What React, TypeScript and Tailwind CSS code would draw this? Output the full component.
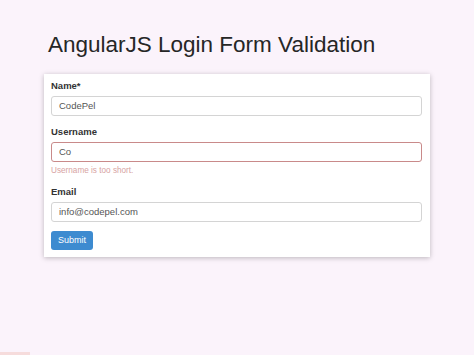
import React from 'react';

const Field: React.FC<{ label: string; value: string; error?: boolean }> = ({ label, value, error }) => (
  <div>
    <label className="block text-[9.5px] leading-[12px] font-bold text-[#333] mb-[4px]">{label}</label>
    <div
      className={`h-[20px] w-full rounded-[3px] border bg-white px-[7px] flex items-center text-[9.5px] text-[#555] ${
        error ? 'border-[#c98a8a]' : 'border-[#d4d4d4]'
      }`}
    >
      {value}
    </div>
  </div>
);

const App: React.FC = () => {
  return (
    <div className="min-h-[355px] bg-[#fbf3fb] flex flex-col font-['Liberation_Sans',Arial,sans-serif]">
      <div className="pl-[48px] pt-[32px]">
        <h1 className="text-[22.5px] leading-[26px] text-[#262626]">AngularJS Login Form Validation</h1>
      </div>

      {/* form card */}
      <div className="ml-[44px] mt-[16px] w-[386px] bg-white shadow-[0_1px_5px_rgba(0,0,0,0.25)] pt-[6px] pb-[7px] pl-[7px] pr-[8px]">
        <Field label="Name*" value="CodePel" />
        <div className="mt-[10px]">
          <Field label="Username" value="Co" error />
          <p className="mt-[3px] text-[8.2px] leading-[12px] text-[#d7a3a3]">Username is too short.</p>
        </div>
        <div className="mt-[9px]">
          <Field label="Email" value="info@codepel.com" />
        </div>
        <button className="mt-[9px] h-[19px] px-[7px] rounded-[3px] bg-[#3d8bd0] text-white text-[9px] leading-[19px]">
          Submit
        </button>
      </div>

      <div className="mt-auto h-[3px] w-[30px] bg-[#f6dcdc]" />
    </div>
  );
};

export default App;
